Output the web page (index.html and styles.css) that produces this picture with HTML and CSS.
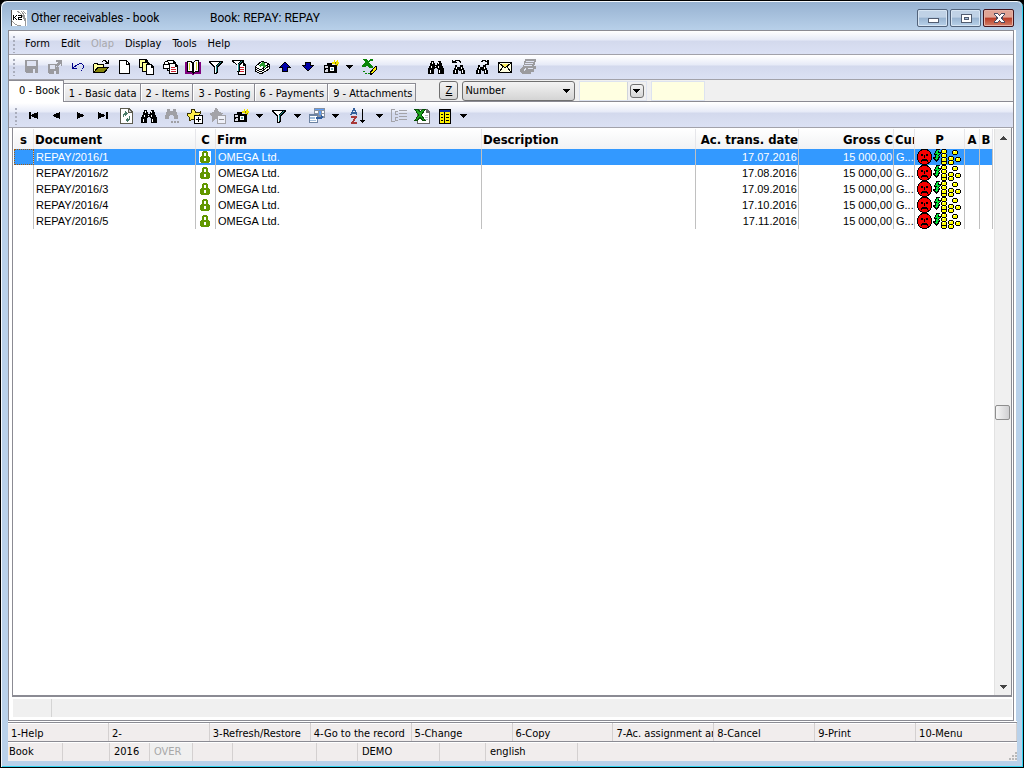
FILE: index.html
```html
<!DOCTYPE html>
<html lang="en">
<head>
<meta charset="utf-8">
<title>Other receivables - book</title>
<link rel="stylesheet" href="styles.css">
</head>
<body>
<svg class="defs" aria-hidden="true">
  <defs>
    <symbol id="save" viewBox="0 0 16 16"><path fill="#9a9a9f" d="M1 1h13v13H2L1 13z"/><path fill="#dfe3f2" d="M3 2h9v5H3zM9 10h2v4H9z"/></symbol>
    <symbol id="export" viewBox="0 0 16 16"><path fill="#9a9a9f" d="M1 5h8v3h3v7H2L1 14zM9 1h6v6h-1V4l-4 4-2-2 3-3H9z"/><path fill="#dfe3f2" d="M3 6h5v4H3zM7 12h2v3H7z"/></symbol>
    <symbol id="undo" viewBox="0 0 16 16"><path fill="#00008b" d="M2 4h1v4h1v1h3v1H2zM4 8V7h1V6h2V5h2V4h3v1h1v1h1v3h-1v1h-1v2h-1v-1h1V9h1V6h-1V5H9v1H7v1H6v1z"/></symbol>
    <symbol id="open" viewBox="0 0 16 16"><path d="M0 14V5h1V4h4v1h6v3h5l-4 6z"/><path fill="#ffff9c" d="M1 5h3v1h6v2H4l-3 5z"/><path fill="#84840a" d="M5 9h9l-3 4H2z"/><path d="M9 2h1V1h3v1h1v1h1V1h1v4h-4V4h1V3h-1V2h-2v1H9z"/></symbol>
    <symbol id="page" viewBox="0 0 16 16"><path d="M3 1h8v1h1v1h1v1h1v11H3z"/><path fill="#fff" d="M4 2h6v4h3v8H4zM11 3v2h1V4z"/></symbol>
    <symbol id="copies" viewBox="0 0 16 16"><path d="M0 0h7l2 2v8H5V9H0z"/><path fill="#ff9" d="M1 1h5v2h2v5H1z"/><path d="M3 3h6l2 2v8H3z"/><path fill="#ff9" d="M4 4h4v2h2v6H4z"/><path d="M7 5h6l2 3v8H7z"/><path fill="#fff" d="M8 6h4v3h2v6H8z"/></symbol>
    <symbol id="doclock" viewBox="0 0 16 16"><path d="M5 1h7l2 3v8H5z"/><path fill="#fff" d="M6 2h5v3h2v6H6z"/><path d="M7 4h7l2 3v8H7z"/><path fill="#fff" d="M8 5h5v3h2v6H8z"/><path fill="#d02030" d="M9 8h4v1H9zM9 10h5v1H9zM9 12h5v1H9z"/><path d="M1 5h1V3h1V2h3v1h1v2h1v5H1z"/><path fill="#fff" d="M3 3h3v2H3zM2 6h5v3H2z"/></symbol>
    <symbol id="book" viewBox="0 0 16 16"><path fill="#800080" d="M0 3h2v10h12V3h2v12H9v1H7v-1H0z"/><path d="M2 2h4l2 2 2-3h4v12h-4l-2 2-2-2H2z"/><path fill="#fff" d="M3 3h3l1 2v8l-1-1H3zM10 2h3v10h-3l-1 1V5z"/><path fill="#d0d030" d="M4 4h1v7H4zM11 3h1v8h-1z"/></symbol>
    <symbol id="funnel" viewBox="0 0 16 16"><path d="M1 2h14v2h-1v1h-1v1h-1v1h-1v1h-1v6H9v1H6V8H5V7H4V6H3V5H2V4H1z"/><path fill="#fff" d="M3 3h8v1h-1v1H9v1H8v8H7V7H6V6H5V5H4V4H3z"/><path fill="#26908d" d="M12 3h1v1h-1v1h-1v1h-1v1H9v6H8V7h1V6h1V5h1V4h1z"/></symbol>
    <symbol id="funneldoc" viewBox="0 0 16 16"><path d="M7 3h6l2 3v10H7z"/><path fill="#fff" d="M8 4h4v3h2v8H8z"/><path fill="#d02030" d="M9 8h4v1H9zM9 10h4v1H9zM9 12h4v1H9z"/><path d="M1 1h12v2h-1v1h-1v1h-1v1H9v7H6V6H5V5H4V4H2V3H1z"/><path fill="#fff" d="M3 2h6v1H8v1H7v8H6V5H5V4H4V3H3z"/><path fill="#26908d" d="M10 2h1v1h-1v1H9v1H8v7H7V5h1V4h1V3h1z"/></symbol>
    <symbol id="books" viewBox="0 0 16 16"><path fill="#fff" stroke="#000" d="M1 8l7-6 7 3v5l-8 5-6-3z"/><path fill="none" stroke="#000" d="M1 8l6 3 8-6M1 10l6 3 8-6"/><path fill="#2a9a30" d="M4 7l4-4 4 1-2 1 2 2-2 2-2-3-1 2z"/></symbol>
    <symbol id="up" viewBox="0 0 16 16"><path d="M7 3h2v1h1v1h1v1h1v1h1v1h1v1h-3v4H5V9H2V8h1V7h1V6h1V5h1V4h1z"/><path fill="#0000a8" d="M7 4h2v1h1v1h1v1h1v1h-2v4H6V8H4V7h1V6h1V5h1z"/></symbol>
    <symbol id="down" viewBox="0 0 16 16"><path d="M5 3h6v3h3v1h-1v1h-1v1h-1v1h-1v1H9v1H7v-1H6v-1H5V9H4V8H3V7H2V6h3z"/><path fill="#0000a8" d="M6 4h4v3h2v1h-1v1h-1v1H9v1H7v-1H6V9H5V8H4V7h2z"/></symbol>
    <symbol id="camera" viewBox="0 0 16 16"><path d="M1 6h3V4h5v2h5v8H1z"/><path fill="#d8d8e0" d="M2 7h3v2H2zM3 10h2v3H2v-2z"/><circle cx="9" cy="10" r="3" fill="#fff" stroke="#000"/><path fill="#68a8a8" d="M8 9h2v2H8z"/><path fill="#f2e600" d="M9 3h2V1h1v2l2-2h1v2h1v2h-1v2h-1V6h-2l-1-1H9z"/><path fill="#8a7b00" d="M12 3h1v2h-1zM14 5h1v1h-1z"/></symbol>
    <symbol id="xpencil" viewBox="0 0 16 16"><path fill="#078407" d="M1 0h4l2 2 2-2h3v2H9L8 4l4 4v1H8L6 6 4 8H1V7l3-4zM2 12h2v1H2zM4 14h2v1H4zM7 14h2v1H7z"/><path d="M14 7h2v3l-5 6H9v-3z"/><path fill="#fff000" d="M14 8h1v2l-4 5-1-1z"/></symbol>
    <symbol id="bino" viewBox="0 0 16 16"><path d="M3 2h3v2h1v2h2V4h1V2h3v2h1v3h1v2h1v6h-6v-5H9v-1H7v1H6v5H0V9h1V7h1V4h1z"/><path fill="#fff" d="M4 3h1v2H4zM3 7h1v2H3zM2 11h1v3H2zM10 3h1v2h-1zM10 7h1v2h-1zM11 11h1v3h-1zM7 7h1v1H7z"/></symbol>
    <symbol id="binoprev" viewBox="0 0 16 16"><path d="M4 6h2v2h3V6h3v3h1v2h1v4h-4v-3H8v-1H7v4H2v-4h1V9h1zM1 1h1v1h2V1h5v1h1v2H9V3H8V2H5v1h1v1H1z"/><path fill="#fff" d="M5 8h1v2H5zM4 11h1v3H4zM10 8h1v2h-1zM11 11h1v3h-1z"/></symbol>
    <symbol id="binonext" viewBox="0 0 16 16"><path d="M4 6h2v2h3V6h3v3h1v2h1v4h-4v-3H8v-1H7v4H2v-4h1V9h1zM7 2h1V1h4v1h1V1h2v5h-4V5h2V3h-2V2H9v1H7z"/><path fill="#fff" d="M5 8h1v2H5zM4 11h1v3H4zM10 8h1v2h-1zM11 11h1v3h-1z"/></symbol>
    <symbol id="binogray" viewBox="0 0 16 16"><path fill="#a0a0a5" d="M3 1h3v2h3V1h3v3h1v3h1v4h-4V8H9V7H6v1H5v3H1V7h1V4h1zM7 13h2v2H7zM10 13h2v2h-2zM13 13h2v2h-2z"/></symbol>
    <symbol id="mail" viewBox="0 0 16 16"><path d="M1 3h14v11H1z"/><path fill="#ffffe0" d="M2 4h12v9H2z"/><path fill="#f5e960" d="M3 5h10L8 9z"/><path fill="none" stroke="#000" d="M2 4l6 5 6-5M2 13l4-5M14 13l-4-5"/></symbol>
    <symbol id="stamp" viewBox="0 0 16 16"><path fill="#9b9b9e" d="M5 0h11v2l-2 5h2v3h-2v3h-3v2H2l-2-2v-3l3-2z"/><path fill="#dfe3f2" d="M6 2h8v1H6zM5 4h8v1H5zM4 6h8v1H4zM3 11l3-2v1l-2 2zM8 9h5v1H8z"/></symbol>
    <symbol id="first" viewBox="0 0 16 16"><path d="M3 4h2v7H3zM12 4v7l-7-3V7z"/></symbol>
    <symbol id="prev" viewBox="0 0 16 16"><path d="M11 4v7L4 8V7z"/></symbol>
    <symbol id="next" viewBox="0 0 16 16"><path d="M5 4v7l7-3V7z"/></symbol>
    <symbol id="last" viewBox="0 0 16 16"><path d="M3 4v7l7-3V7zM11 4h2v7h-2z"/></symbol>
    <symbol id="refresh" viewBox="0 0 16 16"><path fill="#5c5c50" d="M2 0h9l4 4v12H2z"/><path fill="#fff" d="M3 1h7v4h4v10H3z"/><path fill="#c8ccd0" d="M11 2v2h2z"/><path fill="#487a68" d="M5 9V6l2-2V3l3 2-3 3V6L6 7v2zM12 8v3l-2 2v1l-3-2 3-3v2l1-1V8z"/></symbol>
    <symbol id="starplus" viewBox="0 0 16 16"><path fill="#fff04c" stroke="#3a3200" d="M5 1h2l2 4 4-1v2l-3 3v4l-4-2-4 2V9L0 7V6l4-1z"/><path d="M7 7h9v9H7z"/><path fill="#fff" d="M8 8h7v7H8z"/><path d="M11 9h1v2h2v1h-2v2h-1v-2H9v-1h2z"/></symbol>
    <symbol id="starminus" viewBox="0 0 16 16"><path fill="#a3a3a8" d="M5 0h2l2 4 4 1v1l-3 2v4l-4-1-4 3V9L0 6V5l4-1zM7 7h9v9H7z"/><path fill="#eef0f8" d="M8 8h7v7H8z"/><path fill="#909095" d="M9 11h5v1H9z"/></symbol>
    <symbol id="grid" viewBox="0 0 16 16"><path fill="#8791a0" d="M5 0h11v10H5z"/><path fill="#fff" d="M6 3h3v2H6zM10 3h2v2h-2zM13 3h2v2h-2zM6 6h3v2H6zM13 6h2v2h-2z"/><path fill="#5d9df5" d="M6 1h9v1H6zM10 3h2v4h-2z"/><path fill="#6d83a2" d="M0 6h9v9H0z"/><path fill="#fff" d="M1 8h7v6H1z"/><path fill="#a4bfdc" d="M1 9h5v2H1zM1 12h6v1H1z"/><path fill="#315f9f" d="M7 9h5V7l2 2-2 3v-1H7z"/></symbol>
    <symbol id="az" viewBox="0 0 16 16"><path fill="none" stroke="#35609b" stroke-width="1.3" d="M1 7l3-7 3 7M2 5h4"/><path fill="none" stroke="#a83838" stroke-width="1.5" d="M1 9h5l-4 6h5"/><path d="M12 1h1v11h2v1h-1v1h-1v1h-1v-1h-1v-1h-1v-1h2z"/></symbol>
    <symbol id="tree" viewBox="0 0 16 16"><path fill="#a3a3a9" d="M0 1h4v1H1v11h3v1H0zM4 3h3v1H5v2h2v1H4zM4 9h3v1H5v2h2v1H4zM8 2h8v1H8zM8 5h8v1H8zM8 8h8v1H8zM8 11h8v1H8z"/></symbol>
    <symbol id="excel" viewBox="0 0 16 16"><path fill="#666" d="M3 1h10l3 3v12H3z"/><path fill="#fff" d="M4 2h8v3h3v10H4z"/><path fill="#b8bdc4" d="M11 7h3v1h-3zM11 9h3v1h-3zM11 11h3v1h-3z"/><path fill="#054f05" d="M0 1h4l2 2 2-2h4L8 7l4 6H8l-2-3-2 3H0l4-6z"/><path fill="#1ca51c" d="M2 2h2l2 3 2-3h2L7 7l3 5H9L6 8l-3 4H2l3-5z"/></symbol>
    <symbol id="report" viewBox="0 0 16 16"><path d="M2 1h12v15H2z"/><path fill="#0c2ba0" d="M3 2h10v2H3z"/><path fill="#fff200" d="M3 4h10v11H3z"/><path d="M7 4h1v11H7zM4 6h2v1H4zM4 9h2v1H4zM4 12h2v1H4zM9 6h3v1H9zM9 9h3v1H9zM9 12h3v1H9z"/></symbol>
    <symbol id="drop" viewBox="0 0 8 8"><path d="M0 2h7v1H6v1H5v1H4v1H3V5H2V4H1V3H0z"/></symbol>
    <symbol id="lock" viewBox="0 0 12 12"><path fill="#619700" d="M3 1h1V0h4v1h1v4h1v1h1v5h-1v1H2v-1H1V6h1V5h1zM5 2v3h2V2z" fill-rule="evenodd"/><path fill="#fff" d="M5 7h2v3H5z"/></symbol>
    <symbol id="coin" viewBox="0 0 6 5"><path d="M1 0h4v1h1v3H5v1H1V4H0V1h1z"/><path fill="#ff0" d="M1 1h4v3H1z"/><path fill="#fff" d="M2 1h1v1H2z"/></symbol>
    <symbol id="pay" viewBox="0 0 46 16"><path d="M5 0h7v1h1v1h1v1h1v2h1v6h-1v2h-1v1h-1v1h-2v1H6v-1H4v-1H3v-1H2v-2H1V5h1V3h1V2h1V1h1z"/><path fill="#f60000" d="M6 1h5v1h2v1h1v2h1v6h-1v2h-2v1h-1v1H6v-1H4v-1H3v-2H2V5h1V3h1V2h2z"/><path d="M5 5h2v2H5zM10 5h2v2h-2zM8 6h1v3H8zM6 10h5v1h1v2h-1v-1H6v1H5v-2h1z"/><path d="M20 0h4v1h-1v2h2v2h-1v1h-1v1h1v2h-1v2h-1v1h-1v1h-1v-1h-1v-1h-1v-1h-1V8h2V6h-1V4h1V2h1z"/><path fill="#00e33b" d="M21 1h2l-1 1v2h2l-1 1-1 2h1l-2 4h-1l-2-2h2V7l1-2h-2l1-2z"/>
      <use href="#coin" x="25" y="11" width="6" height="5"/><use href="#coin" x="25" y="8" width="6" height="5"/><use href="#coin" x="25" y="4" width="6" height="5"/><use href="#coin" x="25" y="0" width="6" height="5"/><use href="#coin" x="32" y="11" width="6" height="5"/><use href="#coin" x="32" y="7" width="6" height="5"/><use href="#coin" x="36" y="1" width="6" height="5"/><use href="#coin" x="39" y="8" width="6" height="5"/></symbol>
  </defs>
</svg>
<div class="window">
  <header class="titlebar">
    <svg class="logo" viewBox="0 0 16 17" aria-hidden="true"><path fill="#fff" d="M0 0h16v16H0z"/><path fill="none" stroke="#999" d="M6 1q8 4 9 15M10 1q5 5 5 14M1 11q4 5 9 5M12 1l3 3"/><path fill="#555" d="M0 0h1v16H0z"/><path d="M2 5h1v2l2-2h1L4 7l2 3H5L3 8v2H2zM7 5h4v3H8v1h3v1H7V7h3V6H7z"/></svg>
    <h1 class="title">Other receivables - book</h1>
    <span class="subtitle">Book: REPAY: REPAY</span>
    <div class="winbuttons">
      <button class="winbtn" aria-label="Minimize"><svg viewBox="0 0 16 12"><path fill="#515c70" d="M3 6h11v5H3z"/><path fill="#fff" d="M4 7h9v3H4z"/></svg></button>
      <button class="winbtn" aria-label="Maximize"><svg viewBox="0 0 16 12"><path fill="#515c70" d="M3 2h11v9H3z"/><path fill="#fff" d="M4 3h9v7H4z"/><path fill="#515c70" d="M6 5h5v3H6z"/><path fill="#a4bdd8" d="M7 6h3v1H7z"/></svg></button>
      <button class="winbtn close" aria-label="Close"><svg viewBox="0 0 16 12"><path fill="#fff" stroke="#4d4c60" d="M3.500 1.500h3l2 2 2-2h3v1l-3 3.500 3 3.500v1h-3l-2-2-2 2h-3v-1l3-3.500-3-3.500z"/></svg></button>
    </div>
  </header>
  <main class="client">
    <nav class="bar menubar">
      <span class="grip"></span>
      <button>Form</button><button>Edit</button><button disabled>Olap</button><button>Display</button><button>Tools</button><button>Help</button>
    </nav>
    <div class="bar toolbar">
      <span class="grip"></span>
      <button class="tool" aria-label="Save"><svg><use href="#save"/></svg></button>
      <button class="tool" aria-label="Save and close"><svg><use href="#export"/></svg></button>
      <button class="tool" aria-label="Undo"><svg><use href="#undo"/></svg></button>
      <button class="tool" aria-label="Open"><svg><use href="#open"/></svg></button>
      <button class="tool" aria-label="New"><svg><use href="#page"/></svg></button>
      <button class="tool" aria-label="Copy"><svg><use href="#copies"/></svg></button>
      <button class="tool" aria-label="Lock"><svg><use href="#doclock"/></svg></button>
      <button class="tool" aria-label="Book"><svg><use href="#book"/></svg></button>
      <button class="tool" aria-label="Filter"><svg><use href="#funnel"/></svg></button>
      <button class="tool" aria-label="Filter records"><svg><use href="#funneldoc"/></svg></button>
      <button class="tool" aria-label="Change book"><svg><use href="#books"/></svg></button>
      <button class="tool" aria-label="Up"><svg><use href="#up"/></svg></button>
      <button class="tool" aria-label="Down"><svg><use href="#down"/></svg></button>
      <button class="tool" aria-label="Snapshot"><svg><use href="#camera"/></svg></button>
      <button class="drop" aria-label="Snapshot options"><svg><use href="#drop"/></svg></button>
      <button class="tool" aria-label="Edit in sheet"><svg><use href="#xpencil"/></svg></button>
      <span class="space"></span>
      <button class="tool" aria-label="Find"><svg><use href="#bino"/></svg></button>
      <button class="tool" aria-label="Find previous"><svg><use href="#binoprev"/></svg></button>
      <button class="tool" aria-label="Find next"><svg><use href="#binonext"/></svg></button>
      <button class="tool" aria-label="Mail"><svg><use href="#mail"/></svg></button>
      <button class="tool" aria-label="Documents"><svg><use href="#stamp"/></svg></button>
    </div>
    <div class="tabs">
      <button class="tab active">0 - Book</button><button class="tab">1 - Basic data</button><button class="tab">2 - Items</button><button class="tab">3 - Posting</button><button class="tab">6 - Payments</button><button class="tab">9 - Attachments</button>
      <div class="finder">
        <button class="zbtn"><u>Z</u></button>
        <div class="selectbox"><select aria-label="Sort by"><option>Number</option></select><svg><use href="#drop"/></svg></div>
        <div class="combo"><input aria-label="From"><button aria-label="Choose"><svg><use href="#drop"/></svg></button></div>
        <input class="field" aria-label="To">
      </div>
    </div>
    <div class="bar toolbar second">
      <span class="grip"></span>
      <button class="tool" aria-label="First"><svg><use href="#first"/></svg></button>
      <button class="tool" aria-label="Previous"><svg><use href="#prev"/></svg></button>
      <button class="tool" aria-label="Next"><svg><use href="#next"/></svg></button>
      <button class="tool" aria-label="Last"><svg><use href="#last"/></svg></button>
      <button class="tool" aria-label="Refresh"><svg><use href="#refresh"/></svg></button>
      <button class="tool" aria-label="Find"><svg><use href="#bino"/></svg></button>
      <button class="tool" aria-label="Find more"><svg><use href="#binogray"/></svg></button>
      <button class="tool" aria-label="Add mark"><svg><use href="#starplus"/></svg></button>
      <button class="tool" aria-label="Remove mark"><svg><use href="#starminus"/></svg></button>
      <button class="tool" aria-label="Snapshot"><svg><use href="#camera"/></svg></button>
      <button class="drop" aria-label="Snapshot options"><svg><use href="#drop"/></svg></button>
      <button class="tool" aria-label="Filter"><svg><use href="#funnel"/></svg></button>
      <button class="drop" aria-label="Filter options"><svg><use href="#drop"/></svg></button>
      <button class="tool" aria-label="Columns"><svg><use href="#grid"/></svg></button>
      <button class="drop" aria-label="Column options"><svg><use href="#drop"/></svg></button>
      <button class="tool wide" aria-label="Sort"><svg><use href="#az"/></svg></button>
      <button class="drop" aria-label="Sort options"><svg><use href="#drop"/></svg></button>
      <button class="tool" aria-label="Tree"><svg><use href="#tree"/></svg></button>
      <button class="tool" aria-label="Excel"><svg><use href="#excel"/></svg></button>
      <button class="tool" aria-label="Report"><svg><use href="#report"/></svg></button>
      <button class="drop" aria-label="Report options"><svg><use href="#drop"/></svg></button>
    </div>
    <section class="grid">
      <div class="sheet">
        <table>
          <colgroup><col class="c-s"><col class="c-doc"><col class="c-c"><col class="c-firm"><col><col class="c-date"><col class="c-gross"><col class="c-cur"><col class="c-p"><col class="c-a"><col class="c-b"></colgroup>
          <thead><tr><th class="mid">s</th><th>Document</th><th class="mid">C</th><th>Firm</th><th>Description</th><th class="num">Ac. trans. date</th><th class="num">Gross C</th><th>Cur</th><th class="mid">P</th><th class="mid">A</th><th class="mid">B</th></tr></thead>
          <tbody>
            <tr class="selected"><td></td><td>REPAY/2016/1</td><td class="icon"><svg class="lock"><use href="#lock"/></svg></td><td>OMEGA Ltd.</td><td></td><td class="num">17.07.2016</td><td class="num">15 000,00</td><td>G...</td><td class="icon"><svg class="pay"><use href="#pay"/></svg></td><td></td><td></td></tr>
            <tr><td></td><td>REPAY/2016/2</td><td class="icon"><svg class="lock"><use href="#lock"/></svg></td><td>OMEGA Ltd.</td><td></td><td class="num">17.08.2016</td><td class="num">15 000,00</td><td>G...</td><td class="icon"><svg class="pay"><use href="#pay"/></svg></td><td></td><td></td></tr>
            <tr><td></td><td>REPAY/2016/3</td><td class="icon"><svg class="lock"><use href="#lock"/></svg></td><td>OMEGA Ltd.</td><td></td><td class="num">17.09.2016</td><td class="num">15 000,00</td><td>G...</td><td class="icon"><svg class="pay"><use href="#pay"/></svg></td><td></td><td></td></tr>
            <tr><td></td><td>REPAY/2016/4</td><td class="icon"><svg class="lock"><use href="#lock"/></svg></td><td>OMEGA Ltd.</td><td></td><td class="num">17.10.2016</td><td class="num">15 000,00</td><td>G...</td><td class="icon"><svg class="pay"><use href="#pay"/></svg></td><td></td><td></td></tr>
            <tr><td></td><td>REPAY/2016/5</td><td class="icon"><svg class="lock"><use href="#lock"/></svg></td><td>OMEGA Ltd.</td><td></td><td class="num">17.11.2016</td><td class="num">15 000,00</td><td>G...</td><td class="icon"><svg class="pay"><use href="#pay"/></svg></td><td></td><td></td></tr>
          </tbody>
        </table>
      </div>
      <div class="scrollbar">
        <button aria-label="Scroll up"><svg viewBox="0 0 7 4"><path fill="#444" d="M3 0h1l3 4H0z"/></svg></button>
        <span class="track"><span class="thumb"></span></span>
        <button aria-label="Scroll down"><svg viewBox="0 0 7 4"><path fill="#444" d="M0 0h7L4 4H3z"/></svg></button>
      </div>
    </section>
    <div class="infobar"><span></span><span></span></div>
  </main>
  <nav class="fkeys"><button>1-Help</button><button>2-</button><button>3-Refresh/Restore</button><button>4-Go to the record</button><button>5-Change</button><button>6-Copy</button><button>7-Ac. assignment an</button><button>8-Cancel</button><button>9-Print</button><button>10-Menu</button></nav>
  <footer class="status">
    <span>Book</span><span></span><span>2016</span><span class="off">OVER</span><span></span><span></span><span></span><span>DEMO</span><span></span><span>english</span><span class="end"><svg class="sizer" viewBox="0 0 9 9" aria-hidden="true"><path fill="#b9b9b9" d="M7 0h2v2H7zM7 3h2v2H7zM4 3h2v2H4zM7 6h2v2H7zM4 6h2v2H4zM1 6h2v2H1z"/></svg></span>
  </footer>
</div>
</body>
</html>
```
FILE: styles.css
```css
* { box-sizing: border-box; }

body {
  margin: 0;
  background: #000;
  color: #000;
  font: 11px/14px "DejaVu Sans Condensed", "Noto Sans", sans-serif;
}

button, input, select { font: inherit; color: inherit; margin: 0; }
button { border: 0; padding: 0; background: none; }
svg { display: block; shape-rendering: crispEdges; }
.defs { position: absolute; width: 0; height: 0; }

.window {
  display: flex;
  flex-direction: column;
  height: 100vh;
  padding: 0 6px 6px;
  border: 1px solid #000;
  border-radius: 7px 7px 0 0;
  background: #b9d1ea;
  box-shadow: inset 1px 1px 0 #f4f8fc, inset -1px -1px 0 #31d3f0;
}

.titlebar {
  display: flex;
  align-items: center;
  height: 29px;
  flex: none;
  margin: 1px -5px -1px;
  padding: 3px 8px 0 9px;
  border-radius: 6px 6px 0 0;
  background: linear-gradient(#97b2d1, #b9d1ea);
  font: 12px/16px Roboto, "Noto Sans", sans-serif;
}
.logo { width: 16px; height: 17px; margin-right: 4px; }
.title { margin: 0; width: 179px; font: inherit; }
.subtitle { flex: 1; }
.winbuttons { display: flex; gap: 2px; }
.winbtn {
  display: grid;
  place-items: center;
  width: 31px;
  height: 18px;
  border: 1px solid #52637b;
  border-radius: 2px;
  background: linear-gradient(#c0d2e6 45%, #98b3d0 50%, #b9d2ea);
  box-shadow: inset 0 0 0 1px #d7e5f3;
}
.winbtn svg { width: 16px; height: 12px; }
.winbtn.close {
  border-color: #43141d;
  background: linear-gradient(#e0a495 45%, #b93a24 50%, #d28069);
  box-shadow: inset 0 0 0 1px #e5b2a6;
}

.client {
  flex: 1;
  min-height: 0;
  display: flex;
  flex-direction: column;
  margin: 0 3px 0 1px;
  border: 1px solid #8b8b93;
  background: #fff;
  box-shadow: 2px 0 0 #fff;
}

.bar {
  display: flex;
  align-items: center;
  flex: none;
  padding-left: 4px;
  border-bottom: 1px solid #a2a2aa;
  background: linear-gradient(#fff 0, #e6eaf7 9px, #d3d9ed 10px, #dbe1f4 100%);
}
.grip {
  width: 2px;
  height: 17px;
  margin-right: 5px;
  background: repeating-linear-gradient(#a9adbc 0 2px, transparent 2px 4px);
}
.menubar { height: 24px; padding-top: 3px; }
.menubar button { padding: 0 6px 0 5px; }
.menubar button:disabled { color: #a8a8ac; }
.toolbar { height: 25px; padding-bottom: 1px; border-top: 1px solid #fff; }
.toolbar.second { height: 26px; padding: 2px 0 0 6px; }
.tool { display: grid; place-items: center; width: 23px; height: 22px; flex: none; }
.tool svg { width: 16px; height: 16px; }
.tool.wide { width: 29px; }
.drop { display: grid; place-items: center; width: 15px; height: 22px; flex: none; }
.drop svg { width: 8px; height: 8px; }
.space { width: 44px; }

.tabs {
  display: flex;
  align-items: flex-end;
  flex: none;
  height: 22px;
  background: #f0f0f0;
  border-bottom: 1px solid #8b8b93;
}
.tab {
  height: 18px;
  padding: 2px 3px 0 5px;
  border: 1px solid #8b8b93;
  border-width: 1px 1px 0;
  background: linear-gradient(#f6f6f6, #e2e2e4);
  box-shadow: inset 1px 1px 0 #fff;
  white-space: nowrap;
}
.tab + .tab { border-left: 0; }
.tab.active {
  height: 22px;
  padding: 0 3px 2px 10px;
  margin-bottom: -1px;
  border-left: 0;
  background: #fff;
}
.finder { display: flex; align-items: center; height: 21px; margin-left: 23px; }
.zbtn, .combo button {
  border: 1px solid #707070;
  border-radius: 3px;
  background: linear-gradient(#f3f3f3, #d6d6d6);
}
.zbtn { width: 19px; height: 19px; margin-right: 4px; }
.selectbox { position: relative; width: 113px; margin-right: 4px; }
.selectbox select {
  appearance: none;
  display: block;
  width: 100%;
  height: 20px;
  padding: 1px 2px 0;
  border: 1px solid #707070;
  border-radius: 3px;
  background: linear-gradient(#f3f3f3, #d4d4d4);
}
.selectbox svg { position: absolute; right: 4px; top: 6px; width: 8px; height: 8px; pointer-events: none; }
.combo { display: flex; align-items: center; width: 68px; height: 20px; margin-right: 4px; border: 1px solid #dde3f0; }
.combo input { flex: 1; min-width: 0; height: 100%; padding: 0 2px; border: 0; border-right: 1px solid #d0d4dc; background: #ffffe1; }
.combo button { display: grid; place-items: center; width: 14px; height: 14px; margin: 0 2px; }
.combo svg { width: 8px; height: 8px; }
.field { width: 54px; height: 20px; padding: 0 2px; border: 1px solid #dde3f0; background: #ffffe1; }

.grid {
  flex: 1;
  min-height: 0;
  display: flex;
  margin: 0 1px 0 3px;
  border: 1px solid #8b8b93;
  border-bottom-width: 2px;
  border-top: 0;
  padding: 1px 0 0 1px;
}
.sheet { flex: 1; min-width: 0; padding-right: 1px; }
table { width: 100%; table-layout: fixed; border-collapse: separate; border-spacing: 0; font: 11px/16px "Liberation Sans", sans-serif; }
.c-s { width: 20px; }
.c-doc { width: 162px; }
.c-c { width: 20px; }
.c-firm { width: 266px; }
.c-date { width: 103px; }
.c-gross { width: 95px; }
.c-cur { width: 21px; }
.c-p { width: 50px; }
.c-a { width: 15px; }
.c-b { width: 13px; }
th, td { overflow: hidden; white-space: nowrap; text-align: left; }
th {
  height: 20px;
  padding: 2px 0 0 1px;
  background: linear-gradient(#fff, #f1f2f4);
  border-right: 1px solid #e6e6ea;
  font: bold 13px/16px "DejaVu Sans Condensed", "Noto Sans", sans-serif;
}
td { height: 16px; padding: 0 1px 0 2px; border-right: 1px solid #c0c0c0; }
.num { text-align: right; }
th.mid { text-align: center; padding-left: 0; }
td.icon { padding: 0 2px 0 1px; }
.lock { width: 12px; height: 12px; margin: 0 auto; }
.pay { width: 46px; height: 16px; }
.selected td { background: #3399ff; color: #fff; }
.selected td:first-child { outline: 1px dotted #a05a10; outline-offset: -1px; }
.selected .lock { background: #fff; }

.scrollbar { display: flex; flex-direction: column; width: 17px; background: #f0f0f0; border-left: 1px solid #e2e2e2; }
.scrollbar button { display: grid; place-items: center; height: 17px; }
.scrollbar button svg { width: 7px; height: 4px; }
.track { flex: 1; display: flex; flex-direction: column; }
.track::before { content: ""; flex: 259; }
.track::after { content: ""; flex: 258; }
.thumb { height: 15px; margin: 0 1px 0 0; border: 1px solid #8e8e8e; border-radius: 2px; background: linear-gradient(90deg, #f6f6f6, #cfcfd1); }

.infobar { display: flex; flex: none; height: 18px; margin: 2px 1px 3px 4px; background: #f0f0f0; }
.infobar span:first-child { width: 39px; border-right: 1px solid #d4d4d4; }

.fkeys {
  display: grid;
  grid-template-columns: repeat(10, minmax(0, 1fr));
  flex: none;
  height: 20px;
  margin-top: 1px;
  margin-left: 1px;
  border-top: 1px solid #8b8b93;
  border-bottom: 1px solid #8b8b93;
  background: #f1eded;
  box-shadow: 0 -1px 0 #fff, inset 0 1px 0 #fff;
}
.fkeys button { overflow: hidden; padding: 3px 0 0 3px; text-align: left; white-space: nowrap; border-right: 1px solid #d4d0d0; }

.status {
  display: grid;
  grid-template-columns: 55px 47px 40px 43px 40px 84px 41px 82px 46px 92px 1fr;
  flex: none;
  height: 19px;
  margin-left: 1px;
  border-top: 1px solid #fff;
  background: #f1eded;
}
.status span { padding: 2px 0 0 4px; border-right: 1px solid #d4d0d0; }
.status span:first-child { padding-left: 1px; }
.status .off { color: #a8a8a8; background: #f0f0f0; }
.status .end { display: flex; justify-content: flex-end; align-items: flex-end; padding: 0; border: 0; }
.sizer { width: 9px; height: 9px; }
```
